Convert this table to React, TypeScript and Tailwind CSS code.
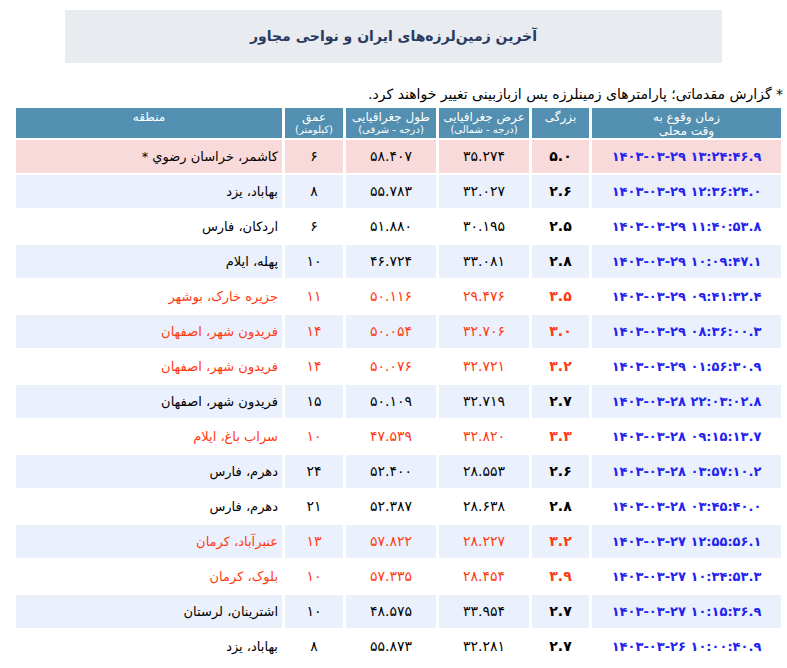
import React from "react";

const fa = (s: string) => s.replace(/[0-9]/g, (d) => "۰۱۲۳۴۵۶۷۸۹"[Number(d)]);

type Row = { t: string; m: string; lat: string; lon: string; d: string; r: string; red?: boolean };

const rows: Row[] = [
  { t: "1403-03-29 13:24:46.9", m: "5.0", lat: "35.274", lon: "58.407", d: "6", r: "کاشمر، خراسان رضوي *" },
  { t: "1403-03-29 12:36:24.0", m: "2.6", lat: "32.027", lon: "55.783", d: "8", r: "بهاباد، یزد" },
  { t: "1403-03-29 11:40:53.8", m: "2.5", lat: "30.195", lon: "51.880", d: "6", r: "اردکان، فارس" },
  { t: "1403-03-29 10:09:47.1", m: "2.8", lat: "33.081", lon: "46.724", d: "10", r: "پهله، ایلام" },
  { t: "1403-03-29 09:41:32.4", m: "3.5", lat: "29.476", lon: "50.116", d: "11", r: "جزیره خارک، بوشهر", red: true },
  { t: "1403-03-29 08:36:00.3", m: "3.0", lat: "32.706", lon: "50.054", d: "14", r: "فریدون شهر، اصفهان", red: true },
  { t: "1403-03-29 01:56:30.9", m: "3.2", lat: "32.721", lon: "50.076", d: "14", r: "فریدون شهر، اصفهان", red: true },
  { t: "1403-03-28 22:03:02.8", m: "2.7", lat: "32.719", lon: "50.109", d: "15", r: "فریدون شهر، اصفهان" },
  { t: "1403-03-28 09:15:13.7", m: "3.3", lat: "32.820", lon: "47.539", d: "10", r: "سراب باغ، ایلام", red: true },
  { t: "1403-03-28 03:57:10.2", m: "2.6", lat: "28.553", lon: "52.400", d: "24", r: "دهرم، فارس" },
  { t: "1403-03-28 03:45:40.0", m: "2.8", lat: "28.638", lon: "52.387", d: "21", r: "دهرم، فارس" },
  { t: "1403-03-27 12:55:56.1", m: "3.2", lat: "28.227", lon: "57.822", d: "13", r: "عنبرآباد، کرمان", red: true },
  { t: "1403-03-27 10:34:53.3", m: "3.9", lat: "28.454", lon: "57.335", d: "10", r: "بلوک، کرمان", red: true },
  { t: "1403-03-27 10:15:36.9", m: "2.7", lat: "33.954", lon: "48.575", d: "10", r: "اشترینان، لرستان" },
  { t: "1403-03-26 10:00:40.9", m: "2.7", lat: "32.281", lon: "55.873", d: "8", r: "بهاباد، یزد" },
];

export default function App() {
  return (
    <div
      className="w-[787px] h-[668px] overflow-hidden bg-white"
      style={{ fontFamily: '"DejaVu Sans", "Noto Sans", sans-serif' }}
    >
      <div className="mx-auto mt-[10px] w-[657px] h-[53px] bg-[#e8ebf0] flex items-center justify-center">
        <h1 dir="rtl" className="text-[14px] font-bold text-[#2a3a5e] tracking-[-0.2px]">
          آخرین زمین‌لرزه‌های ایران و نواحی مجاور
        </h1>
      </div>

      <div dir="rtl" className="mt-[22px] pr-[4px] text-[14px] leading-[18px] text-black">
        * گزارش مقدماتی؛ پارامترهای زمینلرزه پس ازبازبینی تغییر خواهند کرد.
      </div>

      <div
        dir="rtl"
        className="ml-[16px] mt-[5px] w-[765px] grid grid-cols-[189px_57px_90px_90px_58px_266px] gap-x-[3px] gap-y-[2px]"
      >
        <div className="h-[30px] bg-[#528fb0] text-white text-[12px] leading-[14px] text-center pt-[2px]">
          زمان وقوع به
          <br />
          وقت محلی
        </div>
        <div className="h-[30px] bg-[#528fb0] text-white text-[12px] leading-[14px] text-center pt-[2px]">
          بزرگی
        </div>
        <div className="h-[30px] bg-[#528fb0] text-white text-center pt-[2px]">
          <div className="text-[12px] leading-[14px]">عرض جغرافیایی</div>
          <div className="text-[10px] leading-[12px]">(درجه - شمالی)</div>
        </div>
        <div className="h-[30px] bg-[#528fb0] text-white text-center pt-[2px]">
          <div className="text-[12px] leading-[14px]">طول جغرافیایی</div>
          <div className="text-[10px] leading-[12px]">(درجه - شرقی)</div>
        </div>
        <div className="h-[30px] bg-[#528fb0] text-white text-center pt-[2px]">
          <div className="text-[12px] leading-[14px]">عمق</div>
          <div className="text-[10px] leading-[12px]">(کیلومتر)</div>
        </div>
        <div className="h-[30px] bg-[#528fb0] text-white text-[12px] leading-[14px] text-center pt-[2px]">
          منطقه
        </div>

        {rows.map((row, i) => {
          const bg = i === 0 ? "bg-[#f8dada]" : i % 2 === 1 ? "bg-[#eaf1fc]" : "bg-white";
          const tc = row.red ? "text-[#ff3a12]" : "text-black";
          const cell = `h-[33px] flex items-center ${bg}`;
          return (
            <React.Fragment key={i}>
              <div className={`${cell} justify-center`}>
                <span dir="ltr" className="text-[13px] font-bold text-[#2323ee] tracking-[1.1px]">
                  {fa(row.t)}
                </span>
              </div>
              <div className={`${cell} justify-center text-[14px] font-semibold ${tc}`}>
                <span dir="ltr">{fa(row.m)}</span>
              </div>
              <div className={`${cell} justify-center text-[14px] ${tc}`}>
                <span dir="ltr">{fa(row.lat)}</span>
              </div>
              <div className={`${cell} justify-center text-[14px] ${tc}`}>
                <span dir="ltr">{fa(row.lon)}</span>
              </div>
              <div className={`${cell} justify-center text-[14px] ${tc}`}>{fa(row.d)}</div>
              <div className={`${cell} justify-start pr-[4px] text-[13px] ${tc}`}>{row.r}</div>
            </React.Fragment>
          );
        })}
      </div>
    </div>
  );
}
